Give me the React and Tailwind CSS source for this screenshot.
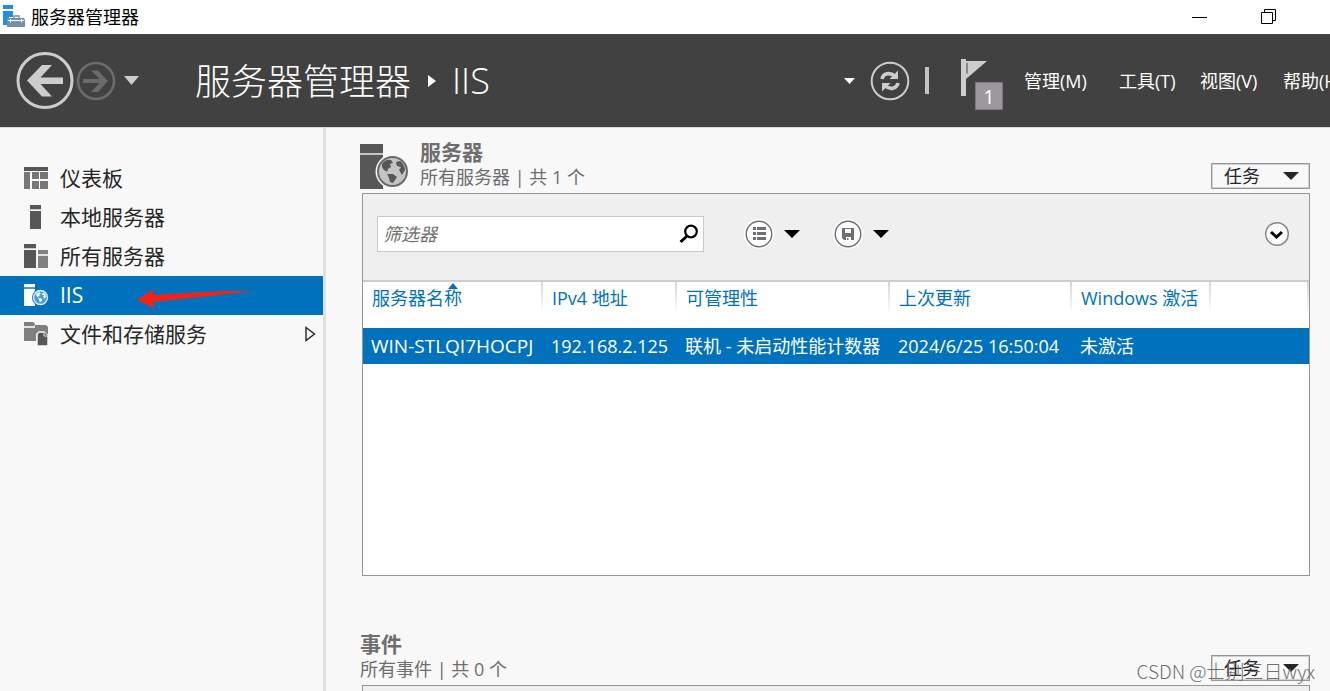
import React from 'react';
import clsx from 'clsx';

const COLUMNS = [
  { label: '服务器名称', width: 'w-[180px]', sorted: true },
  { label: 'IPv4 地址', width: 'w-[134px]' },
  { label: '可管理性', width: 'w-[213px]' },
  { label: '上次更新', width: 'w-[182px]' },
  { label: 'Windows 激活', width: 'w-[139px]' },
];

const SERVERS = [
  ['WIN-STLQI7HOCPJ', '192.168.2.125', '联机 - 未启动性能计数器', '2024/6/25 16:50:04', '未激活'],
];

const MENUS = [
  { label: '管理(M)', width: 'w-[95px]' },
  { label: '工具(T)', width: 'w-[81px]' },
  { label: '视图(V)', width: 'w-[83px]' },
  { label: '帮助(H)', width: 'w-[47px]' },
];

const GLOBE_LAND =
  'M4 6C6 3 9 1 13 2L15 5L12 6L13 9L10 11L9 14L6 12L4 9ZM18 4L22 3C25 5 27 9 27 12L24 17L21 12L23 9L19 8ZM9 16L15 16L19 19L15 25L12 24L11 20Z';

function Triangle({ className }) {
  return (
    <svg viewBox="0 0 16 8" className={className} preserveAspectRatio="none" aria-hidden="true">
      <path d="M0 0H16L8 8Z" fill="currentColor" />
    </svg>
  );
}

function AppIcon() {
  return (
    <svg width="24" height="24" viewBox="0 0 24 24" aria-hidden="true">
      <path d="M1 1H11V5H1ZM1 7H11V13H7V15H5V21H1Z" fill="#1f8fe0" />
      <path d="M12 14V12H17V14" fill="none" stroke="#7391a6" strokeWidth="1.4" />
      <path d="M6 14H22L23 16V23H5V16Z" fill="#7391a6" />
      <path d="M6 16.5H22M8.5 15V18.5M19.5 15V18.5" fill="none" stroke="#fff" strokeWidth="1.1" />
    </svg>
  );
}

function DashboardIcon() {
  return (
    <svg width="24" height="24" viewBox="0 0 24 24" aria-hidden="true">
      <path d="M0 1H24V5H0Z" fill="#575757" />
      <path d="M0 6H6V23H0ZM8 6H15V13H8ZM16 6H24V13H16ZM8 15H15V23H8ZM16 15H24V23H16Z" fill="#777" />
    </svg>
  );
}

function LocalServerIcon() {
  return (
    <svg width="24" height="24" viewBox="0 0 24 24" aria-hidden="true">
      <path d="M6 0H17V4H6ZM6 6H17V24H6Z" fill="#575757" />
      <path d="M6 4.5H17" stroke="#c4c4c4" />
    </svg>
  );
}

function AllServersIcon() {
  return (
    <svg width="24" height="24" viewBox="0 0 24 24" aria-hidden="true">
      <path d="M0 0H12V4H0ZM0 6H12V24H0Z" fill="#575757" />
      <path d="M14 6H24V10H14ZM14 12H24V24H14Z" fill="#808080" />
      <path d="M0 4.5H12M14 11H24" stroke="#ccc" />
    </svg>
  );
}

function IisIcon() {
  return (
    <svg width="25" height="24" viewBox="0 0 25 24" aria-hidden="true">
      <path d="M0 1H11V4H0ZM0 6H11V23H0Z" fill="#fff" />
      <path d="M0 5H11" stroke="#8fc3e8" />
      <circle cx="16.5" cy="14.5" r="8.5" fill="#0072bd" />
      <circle cx="16.5" cy="14.5" r="7" fill="#4c9fd8" stroke="#d9edf9" strokeWidth="1.4" />
      <g transform="translate(10.5 8.5) scale(.42)">
        <path d={GLOBE_LAND} fill="#fff" />
      </g>
    </svg>
  );
}

function StorageIcon() {
  return (
    <svg width="24" height="24" viewBox="0 0 24 24" aria-hidden="true">
      <path d="M0 0H9L11 2V4H0Z" fill="#808080" />
      <path d="M0 6H11V3H22L24 5V12H12V19H0Z" fill="#808080" />
      <path d="M0 5H10.5V3" fill="none" stroke="#d0d0d0" />
      <path d="M13 24V12L15 10H20L24 14V24Z" fill="#575757" stroke="#f8f8f8" strokeWidth="1.4" />
      <path d="M20 10V14H24" fill="#575757" stroke="#e6e6e6" />
    </svg>
  );
}

function ServerGlobeIcon() {
  return (
    <svg width="48" height="46" viewBox="0 0 48 46" aria-hidden="true">
      <path d="M0 0H23V45H0Z" fill="#575757" />
      <path d="M0 10H23" stroke="#bfc4c4" strokeWidth="2" />
      <circle cx="32.5" cy="27.5" r="17" fill="#f8f8f8" />
      <circle cx="32.5" cy="27.5" r="14.5" fill="#c4c4c4" stroke="#6a6a6a" strokeWidth="2" />
      <g transform="translate(18 14)">
        <path d={GLOBE_LAND} fill="#575757" />
      </g>
    </svg>
  );
}

const NAV = [
  { label: '仪表板', Icon: DashboardIcon },
  { label: '本地服务器', Icon: LocalServerIcon },
  { label: '所有服务器', Icon: AllServersIcon },
  { label: 'IIS', Icon: IisIcon, active: true },
  { label: '文件和存储服务', Icon: StorageIcon, expandable: true },
];

function TitleBar() {
  return (
    <div className="flex h-[34px] shrink-0 items-center bg-white pl-0.5 text-black">
      <div className="pb-0.5">
        <AppIcon />
      </div>
      <span className="ml-[5px] text-[18px] leading-6">服务器管理器</span>
      <div className="ml-auto flex items-center gap-[52px] pr-[54px]">
        <button aria-label="最小化">
          <svg className="block" width="16" height="16" viewBox="0 0 16 16">
            <path d="M0 8.5H15" stroke="#000" />
          </svg>
        </button>
        <button aria-label="还原">
          <svg className="block" width="16" height="16" viewBox="0 0 16 16" fill="none" stroke="#000">
            <path d="M1.5 3.5H12.5V14.5H1.5ZM4.5 3.5V.5H15.5V11.5H12.5" />
          </svg>
        </button>
      </div>
    </div>
  );
}

function Header() {
  return (
    <header className="flex h-[93px] shrink-0 items-center overflow-hidden whitespace-nowrap bg-[#414141] pl-4 text-white">
      <button aria-label="后退">
        <svg className="block" width="58" height="58" viewBox="0 0 58 58">
          <circle cx="29" cy="28.5" r="27" fill="none" stroke="#cdcdcd" strokeWidth="3" />
          <path d="M11 28.5L26 13H36L24.5 25.500H47V32H24.5L36 44.500H26Z" fill="#cdcdcd" />
        </svg>
      </button>
      <button className="ml-0.5" aria-label="前进">
        <svg className="block" width="40" height="40" viewBox="0 0 40 40">
          <circle cx="20" cy="20" r="18" fill="none" stroke="#6b6b6b" strokeWidth="2.6" />
          <path d="M32 20L22 9.5H15L23.5 18H7V22H23.5L15 31H22Z" fill="#6b6b6b" />
        </svg>
      </button>
      <button className="ml-2" aria-label="历史记录">
        <Triangle className="h-[9px] w-[15px] text-[#cdcdcd]" />
      </button>

      <h1 className="ml-14 pt-0.5 text-[36px] font-light leading-[48px]">服务器管理器</h1>
      <svg className="ml-[17px]" width="8" height="12" viewBox="0 0 8 12" aria-hidden="true">
        <path d="M0 0L8 6L0 12Z" fill="#fff" />
      </svg>
      <span className="ml-4 text-[36px] font-light leading-[48px]">IIS</span>

      <div className="ml-auto flex items-center">
        <button aria-label="更多">
          <Triangle className="h-1.5 w-[11px]" />
        </button>
        <button className="ml-[15px]" aria-label="刷新">
          <svg className="block" width="40" height="40" viewBox="0 0 40 40" fill="none" stroke="#cdcdcd">
            <circle cx="20" cy="20" r="18.3" strokeWidth="2" />
            <path d="M12 18C13 12.5 20 10.5 25 15.5M28 22C27 27.5 20 29.5 15 24.5" strokeWidth="3.6" />
            <path d="M28 9.5V18H19.5L22.5 15ZM12 30.5V22H20.5L17.5 25Z" fill="#cdcdcd" stroke="none" />
          </svg>
        </button>
        <div className="ml-[15px] h-[27px] w-1 bg-[#c4c4c4]" />
        <button className="relative ml-8 mt-2 flex h-[51px] w-[42px] items-start" aria-label="通知">
          <svg className="block" width="26" height="38" viewBox="0 0 26 38">
            <path d="M0 0H5V2H26L5 20V37H0Z" fill="#cdcdcd" />
            <path d="M6 4V14.5" stroke="#414141" />
          </svg>
          <span className="absolute bottom-0 right-0 h-7 w-7 border border-[#7c7a7c] bg-[#9b999b] text-center text-[20px] leading-7">
            1
          </span>
        </button>
        <nav className="ml-[21px] flex text-[18px] leading-6">
          {MENUS.map((menu) => (
            <button key={menu.label} className={clsx('text-left', menu.width)}>
              {menu.label}
            </button>
          ))}
        </nav>
      </div>
    </header>
  );
}

function Sidebar() {
  return (
    <aside className="w-[326px] shrink-0 border-r-[3px] border-[#e0e0e0] pt-[31px]">
      <ul>
        {NAV.map(({ label, Icon, active, expandable }) => (
          <li key={label} className="relative">
            <a
              href="#"
              className={clsx(
                'flex h-[39px] items-center pb-0.5 pl-6 pr-[7px] text-[21px] leading-7',
                active ? 'bg-[#0072bd] text-white' : 'text-[#262626]'
              )}
            >
              <span className="w-9">
                <Icon />
              </span>
              {label}
              {expandable && (
                <svg className="ml-auto" width="11" height="16" viewBox="0 0 11 16" aria-hidden="true">
                  <path d="M1 1.5L9.5 8L1 14.5Z" fill="none" stroke="#262626" strokeWidth="1.4" />
                </svg>
              )}
            </a>
            {active && (
              <svg
                className="pointer-events-none absolute left-[137px] top-3"
                width="120"
                height="22"
                viewBox="0 0 120 22"
                aria-hidden="true"
              >
                <path d="M0 12L17 1L15 7L90 3L116 3.5L90 6L15 14L19 20.5Z" fill="#ff1f10" />
              </svg>
            )}
          </li>
        ))}
      </ul>
    </aside>
  );
}

function SectionHeader({ title, subtitle, icon }) {
  return (
    <div className="flex h-[53px] items-start text-[#6e6e6e]">
      {icon && <div className="mr-3 pt-1">{icon}</div>}
      <div>
        <h2 className="mb-px text-[21px] font-bold leading-6">{title}</h2>
        <p className="text-[18px] leading-6">{subtitle}</p>
      </div>
      <button className="ml-auto mt-[23px] flex h-[26px] w-[99px] items-center justify-between border border-[#969696] pl-3 pr-2.5 text-[18px] leading-6 text-[#262626] inset-ring inset-ring-[#d0d0d0]">
        任务
        <Triangle className="h-2 w-4" />
      </button>
    </div>
  );
}

function FilterBar() {
  return (
    <div className="flex h-[88px] items-center border-b-2 border-[#cdcdcd] bg-[#efefef] pb-1.5 pl-3.5 pr-[19px]">
      <div className="flex h-9 w-[327px] items-center border border-[#c8c8c8] bg-white pl-[5px] pr-1">
        <input
          type="text"
          aria-label="筛选器"
          placeholder="筛选器"
          className="min-w-0 flex-1 text-[18px] italic leading-6 outline-none placeholder:text-[#6e6e6e]"
        />
        <button aria-label="搜索">
          <svg className="block" width="20" height="20" viewBox="0 0 20 20" fill="none" stroke="#000">
            <circle cx="12" cy="7.5" r="5.8" strokeWidth="2.2" />
            <path d="M8 12L1.5 18" strokeWidth="3" />
          </svg>
        </button>
      </div>
      <button className="ml-10 flex items-center gap-2.5" aria-label="分组">
        <svg width="30" height="30" viewBox="0 0 30 30">
          <circle cx="15" cy="15" r="15" fill="#fff" />
          <circle cx="15" cy="15" r="12.8" fill="#fff" stroke="#6d6f75" strokeWidth="1.4" />
          <path d="M9 8H12V11H9ZM13 8H22V11H13ZM9 13H12V16H9ZM13 13H22V16H13ZM9 18H12V21H9ZM13 18H22V21H13Z" fill="#6d6f75" />
        </svg>
        <Triangle className="h-2 w-4" />
      </button>
      <button className="ml-[33px] flex items-center gap-2.5" aria-label="保存">
        <svg width="30" height="30" viewBox="0 0 30 30">
          <circle cx="15" cy="15" r="15" fill="#fff" />
          <circle cx="15" cy="15" r="12.8" fill="#fff" stroke="#6d6f75" strokeWidth="1.4" />
          <path d="M9 9H21V21H18V18H13V21H11L9 19ZM12 10V14H18V10ZM14 19V21H15.5V19Z" fill="#6d6f75" fillRule="evenodd" />
        </svg>
        <Triangle className="h-2 w-4" />
      </button>
      <button className="ml-auto" aria-label="展开">
        <svg className="block" width="26" height="26" viewBox="0 0 26 26">
          <circle cx="13" cy="13" r="11.3" fill="#fcfcfc" stroke="#858585" strokeWidth="1.4" />
          <path d="M7 11L12.5 16L18 11" fill="none" stroke="#000" strokeWidth="3" />
        </svg>
      </button>
    </div>
  );
}

function ServerTable() {
  return (
    <table className="w-full table-fixed whitespace-nowrap text-[18px] leading-6">
      <thead>
        <tr className="h-[46px] text-left text-[#0072bd]">
          {COLUMNS.map((col) => (
            <th key={col.label} className={clsx('relative p-0 align-top font-normal', col.width)}>
              <div className="h-8 border-r-2 pl-[9px] pt-1 [border-image:linear-gradient(#d4d4d4,#ffffff)_1]">
                {col.label}
              </div>
              {col.sorted && (
                <svg className="absolute left-[85px] top-px" width="10" height="6" viewBox="0 0 10 6" aria-hidden="true">
                  <path d="M0 6L5 0L10 6Z" fill="#0072bd" />
                </svg>
              )}
            </th>
          ))}
          <th className="p-0 align-top">
            <div className="h-8 border-r-2 [border-image:linear-gradient(#d4d4d4,#ffffff)_1]" />
          </th>
        </tr>
      </thead>
      <tbody>
        {SERVERS.map((row) => (
          <tr key={row[0]} className="h-9 bg-[#0072bd] text-white">
            {row.map((cell, i) => (
              <td key={cell} className={clsx('py-0 pl-2 pr-0', i === 0 && 'text-[19px]')}>
                {cell}
              </td>
            ))}
            <td />
          </tr>
        ))}
      </tbody>
    </table>
  );
}

export default function App() {
  return (
    <div className='relative flex h-screen flex-col overflow-hidden bg-[#f8f8f8] font-["Open_Sans","Noto_Sans_CJK_SC",sans-serif]'>
      <TitleBar />
      <Header />
      <div className="flex min-h-0 flex-1 border-t border-[#dcdcdc]">
        <Sidebar />
        <main className="min-w-0 flex-1 overflow-hidden pl-[34px] pr-5 pt-3">
          <section>
            <SectionHeader title="服务器" subtitle="所有服务器 | 共 1 个" icon={<ServerGlobeIcon />} />
            <div className="ml-0.5 h-[383px] border border-[#969696] bg-white">
              <FilterBar />
              <ServerTable />
            </div>
          </section>
          <section className="mt-14">
            <SectionHeader title="事件" subtitle="所有事件 | 共 0 个" />
            <div className="ml-0.5 h-[383px] border border-[#969696] bg-[#efefef]" />
          </section>
        </main>
      </div>
      <div className='pointer-events-none absolute bottom-2 right-[15px] font-["Noto_Sans_CJK_SC",sans-serif] text-[19px] font-light leading-6 text-[#707070]'>
        CSDN @士别三日wyx
      </div>
    </div>
  );
}
